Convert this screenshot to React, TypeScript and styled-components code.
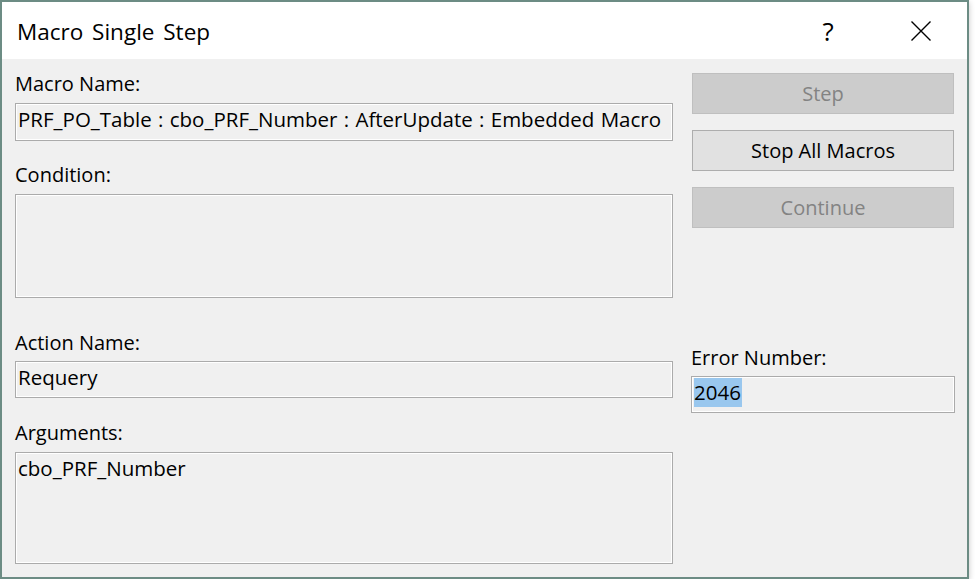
import React from "react";
import styled, { createGlobalStyle } from "styled-components";

const GlobalStyle = createGlobalStyle`
  html, body {
    margin: 0;
    padding: 0;
    background: #ffffff;
  }
  body {
    font-family: "Open Sans", "Noto Sans", "Liberation Sans", sans-serif;
    color: #000;
  }
`;

const Window = styled.div`
  width: 969px;
  height: 579px;
  box-sizing: border-box;
  border: 2px solid #6c8c84;
  background: #f0f0f0;
  box-shadow: 0 2px 6px rgba(0, 0, 0, 0.22);
  display: flex;
  flex-direction: column;
`;

const TitleBar = styled.div`
  height: 57px;
  background: #ffffff;
  display: flex;
  align-items: center;
  padding-left: 15px;
`;

const Title = styled.div`
  flex: 1;
  font-size: 22.5px;
  line-height: 28px;
  word-spacing: 3px;
  padding-top: 2px;
`;

const TitleButton = styled.div<{ $w: number }>`
  width: ${(p) => p.$w}px;
  height: 57px;
  display: flex;
  align-items: center;
  justify-content: center;
  font-size: 26px;
`;

const Body = styled.div`
  flex: 1;
  display: flex;
  gap: 18px;
  padding: 13px 12px 0 13px;
`;

const LeftColumn = styled.div`
  width: 658px;
  display: flex;
  flex-direction: column;
`;

const RightColumn = styled.div`
  width: 264px;
  display: flex;
  flex-direction: column;
`;

const Label = styled.div<{ $mt?: number }>`
  font-size: 20px;
  line-height: 24px;
  height: 24px;
  margin-top: ${(p) => p.$mt ?? 0}px;
  white-space: nowrap;
`;

const Field = styled.div<{ $h: number; $mt?: number }>`
  height: ${(p) => p.$h}px;
  margin-top: ${(p) => p.$mt ?? 6}px;
  box-sizing: border-box;
  border: 1px solid #ababab;
  box-shadow: inset 0 0 0 1px #ffffff;
  padding: 3px 3px 0 2px;
  font-size: 20.5px;
  line-height: 24px;
  word-spacing: 1px;
  white-space: nowrap;
  overflow: hidden;
`;

const Selected = styled.span`
  background: #99c7ee;
  padding: 0 1px 1px 0;
`;

const Button = styled.div<{ $disabled?: boolean; $mt?: number }>`
  height: 41px;
  margin: ${(p) => p.$mt ?? 0}px 1px 0 1px;
  box-sizing: border-box;
  border: 1px solid ${(p) => (p.$disabled ? "#bfbfbf" : "#adadad")};
  background: ${(p) => (p.$disabled ? "#cccccc" : "#e1e1e1")};
  color: ${(p) => (p.$disabled ? "#838383" : "#000000")};
  display: flex;
  align-items: center;
  justify-content: center;
  font-size: 20px;
`;

const CloseIcon = () => (
  <svg width="20" height="20" viewBox="0 0 20 20">
    <path d="M0.5 0.5 L19.5 19.5 M19.5 0.5 L0.5 19.5" stroke="#000" strokeWidth="1.4" fill="none" />
  </svg>
);

export default function App() {
  return (
    <>
      <GlobalStyle />
      <Window>
        <TitleBar>
          <Title>Macro Single Step</Title>
          <TitleButton $w={92}>?</TitleButton>
          <TitleButton $w={93}>
            <CloseIcon />
          </TitleButton>
        </TitleBar>
        <Body>
          <LeftColumn>
            <Label>Macro Name:</Label>
            <Field $h={38} $mt={7}>
              PRF_PO_Table : cbo_PRF_Number : AfterUpdate : Embedded Macro
            </Field>
            <Label $mt={22}>Condition:</Label>
            <Field $h={104} $mt={7} />
            <Label $mt={33}>Action Name:</Label>
            <Field $h={37} $mt={6}>
              Requery
            </Field>
            <Label $mt={23}>Arguments:</Label>
            <Field $h={112} $mt={7}>
              cbo_PRF_Number
            </Field>
          </LeftColumn>
          <RightColumn>
            <Button $disabled $mt={1}>Step</Button>
            <Button $mt={16}>Stop All Macros</Button>
            <Button $disabled $mt={16}>Continue</Button>
            <Label $mt={118}>Error Number:</Label>
            <Field $h={37} $mt={6}>
              <Selected>2046</Selected>
            </Field>
          </RightColumn>
        </Body>
      </Window>
    </>
  );
}
